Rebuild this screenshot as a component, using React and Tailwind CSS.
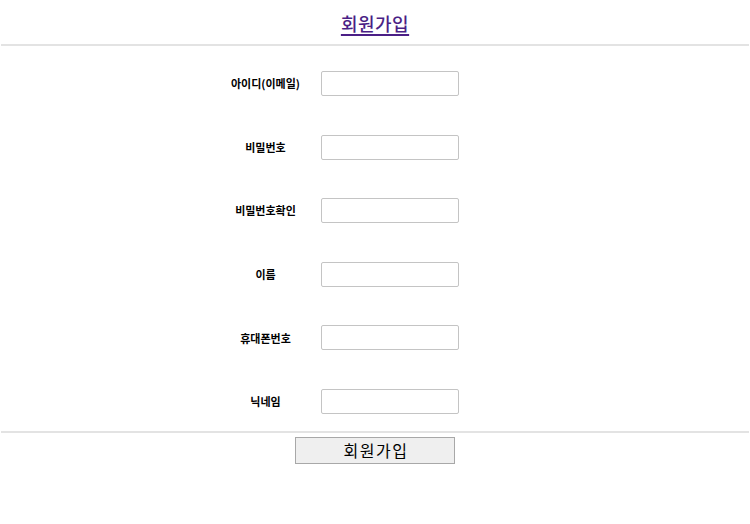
export default function App() {
  const fields = ["아이디(이메일)", "비밀번호", "비밀번호확인", "이름", "휴대폰번호", "닉네임"];
  return (
    <div className="w-[750px] h-[524px] bg-white" style={{ fontFamily: '"Noto Sans CJK KR", "Noto Sans", sans-serif' }}>
      <div className="h-[44px] flex items-center justify-center pt-[1px]">
        <a href="#" className="text-[18px] leading-none font-medium tracking-[0.5px] text-[#4b1f86] underline underline-offset-[3px] decoration-[1.5px]">회원가입</a>
      </div>
      <div className="mx-[1px] h-[2px] bg-[#e3e3e3]" />
      <div className="flex flex-col gap-[38.6px] pt-[25px] pb-[17px]">
        {fields.map((f) => (
          <div key={f} className="flex items-center h-[25px] ml-[210px]">
            <div className="w-[111px] text-center text-[11px] font-bold text-black">{f}</div>
            <input className="w-[138px] h-[25px] border border-[#c4c4c4] rounded-[2px] bg-white outline-none" />
          </div>
        ))}
      </div>
      <div className="mx-[1px] h-[2px] bg-[#e3e3e3]" />
      <div className="flex justify-center pt-[4px]">
        <button className="w-[160px] h-[27px] border border-[#a8a8a8] bg-[#efefef] text-[16px] leading-none text-black tracking-[1.5px] pl-[2px]">회원가입</button>
      </div>
    </div>
  );
}
